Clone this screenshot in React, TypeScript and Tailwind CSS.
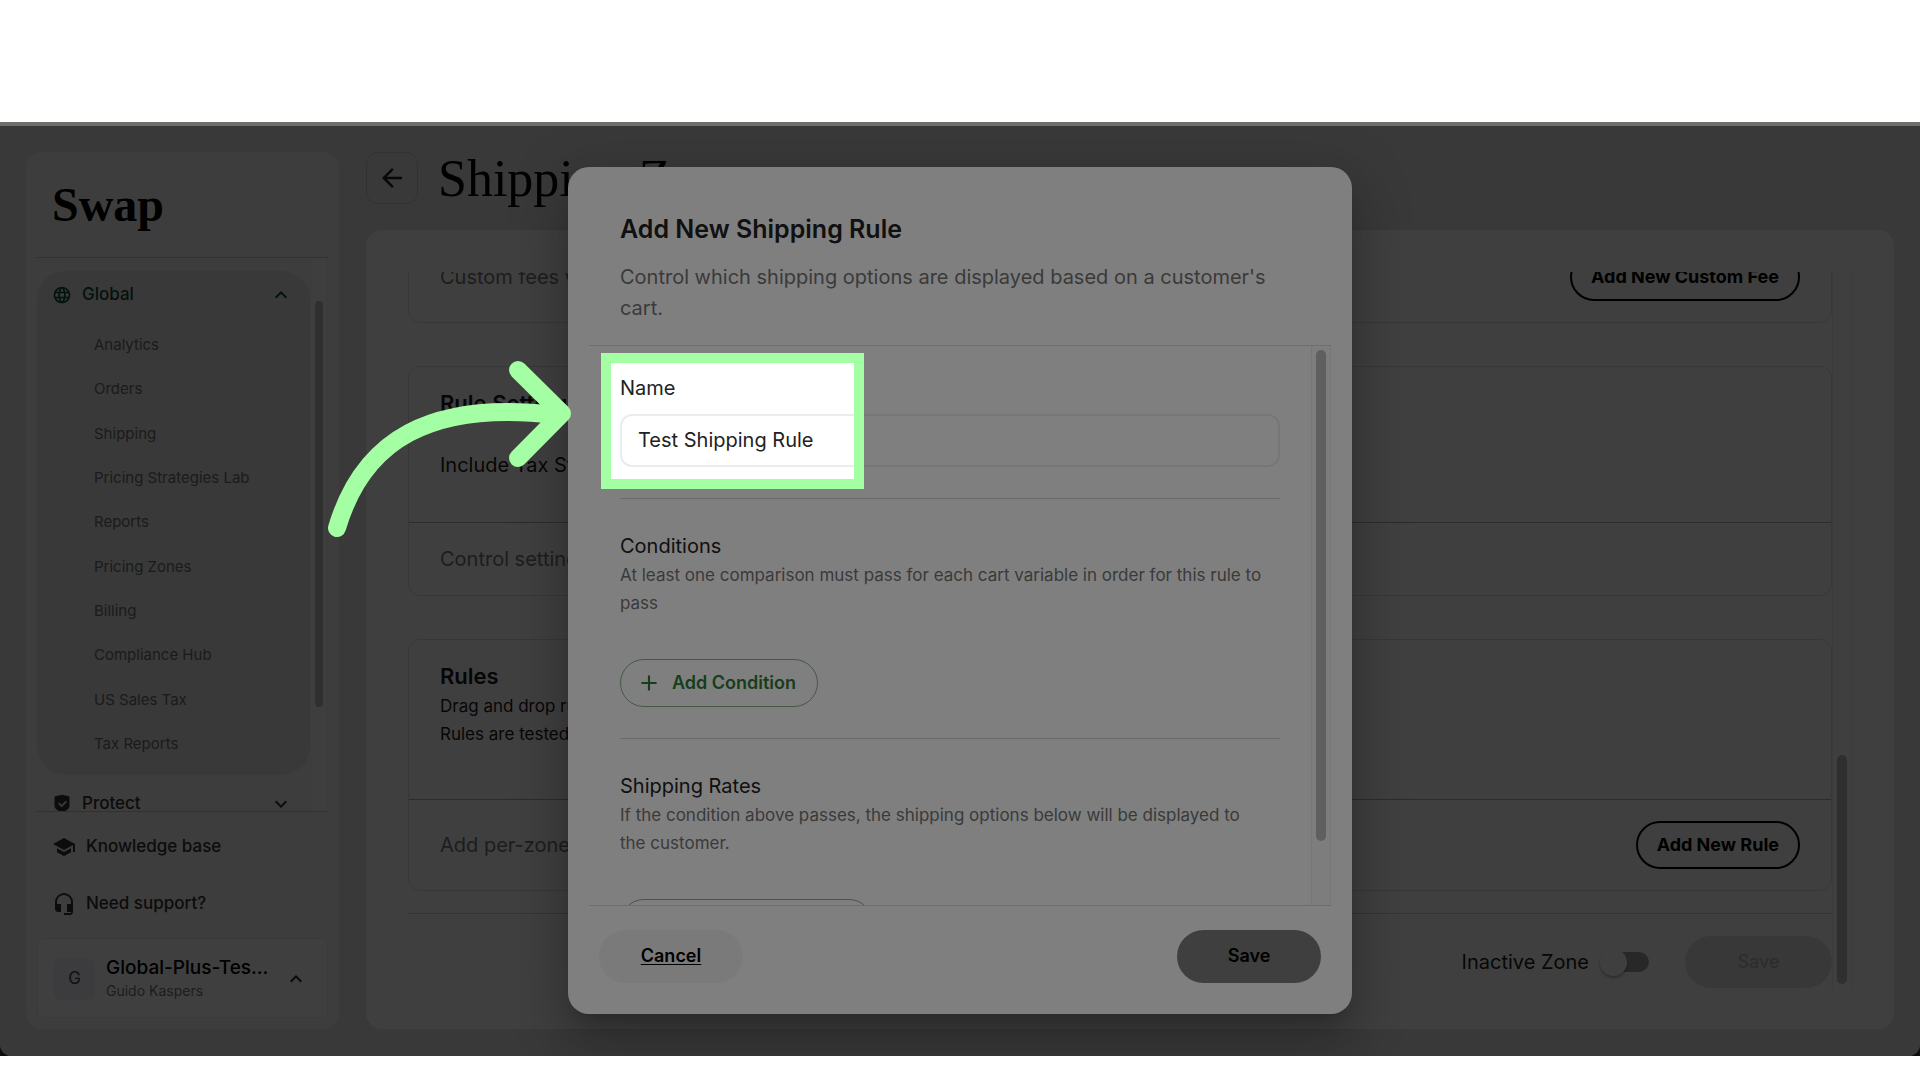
import type { ReactNode } from "react";
import {
  MdAdd,
  MdArrowBack,
  MdExpandLess,
  MdExpandMore,
  MdHeadsetMic,
  MdLanguage,
  MdSchool,
} from "react-icons/md";
import { RiShieldCheckFill } from "react-icons/ri";

const globalLinks = [
  "Analytics",
  "Orders",
  "Shipping",
  "Pricing Strategies Lab",
  "Reports",
  "Pricing Zones",
  "Billing",
  "Compliance Hub",
  "US Sales Tax",
  "Tax Reports",
];

function Sidebar() {
  return (
    <aside className="flex w-[313px] shrink-0 flex-col rounded-2xl bg-[#f5f5f5] px-[11px] pb-[11px]">
      <div className="flex h-[106px] shrink-0 items-center border-b border-[#c4c4c4] px-[15px]">
        <a
          href="#home"
          className="font-['Liberation_Serif',serif] text-5xl leading-none font-bold text-black"
        >
          Swap
        </a>
      </div>
      <div className="flex min-h-0 flex-1 border-b border-[#c4c4c4]">
        <nav className="flex-1 overflow-hidden pt-[13px]">
          <div className="rounded-[28px] bg-[#e6e6e6] pb-[9px]">
            <button className="flex h-12 w-full items-center gap-[10px] pr-[17px] pl-[15px] text-[#0d4a33]">
              <MdLanguage className="size-5" />
              <span className="flex-1 text-left text-[17px] font-medium">Global</span>
              <MdExpandLess className="size-6" />
            </button>
            <ul className="mt-1 flex h-[443px] flex-col">
              {globalLinks.map((label) => (
                <li key={label} className="flex flex-1 items-center pl-[57px]">
                  <a href="#nav" className="text-[15px] leading-5 text-[#6f6f6f]">
                    {label}
                  </a>
                </li>
              ))}
            </ul>
          </div>
          <button className="mt-px flex h-14 w-full items-center gap-[10px] pr-[17px] pl-[15px] text-[#333]">
            <RiShieldCheckFill className="size-5" />
            <span className="flex-1 text-left text-[17px] font-medium">Protect</span>
            <MdExpandMore className="size-6" />
          </button>
        </nav>
        <div className="w-[18px] border-x border-[#ececec] bg-[#fafafa] px-1 pt-[43px]">
          <div className="h-[406px] rounded-full bg-[#bcbcbc]" />
        </div>
      </div>
      <div className="py-[6px]">
        <a href="#kb" className="flex h-[57px] items-center gap-[10px] pl-[15px] text-[#333]">
          <MdSchool className="size-6" />
          <span className="text-[17px] font-medium">Knowledge base</span>
        </a>
        <a href="#support" className="flex h-[57px] items-center gap-[10px] pl-[15px] text-[#333]">
          <MdHeadsetMic className="size-6" />
          <span className="text-[17px] font-medium">Need support?</span>
        </a>
      </div>
      <button className="flex h-20 shrink-0 items-center rounded-md border border-[#ebebeb] bg-white pt-[2px] pr-[19px] pl-4 text-left">
        <span className="flex h-[42px] w-[41px] items-center justify-center rounded-lg bg-[#f0eefa] text-[17px] text-[#444]">
          G
        </span>
        <span className="ml-[11px] flex min-w-0 flex-1 flex-col">
          <span className="text-[19px] leading-6 font-medium text-black">Global-Plus-Tes...</span>
          <span className="text-sm leading-[22px] text-[#777]">Guido Kaspers</span>
        </span>
        <MdExpandLess className="size-6 shrink-0 text-[#222]" />
      </button>
    </aside>
  );
}

function Card({ children, footer }: { children: ReactNode; footer: ReactNode }) {
  return (
    <section className="shrink-0 rounded-xl border border-[#dedede]">
      <div className="border-b border-[#b0b0b0] px-[31px] pt-5">{children}</div>
      <div className="flex items-center justify-between px-[31px] py-[21px]">{footer}</div>
    </section>
  );
}

function OutlineButton({ children }: { children: ReactNode }) {
  return (
    <button className="h-12 rounded-full border-2 border-black px-[19px] text-lg font-bold text-black">
      {children}
    </button>
  );
}

function ZonePage() {
  return (
    <main className="flex min-w-0 flex-1 flex-col gap-[26px]">
      <header className="flex h-[52px] shrink-0 items-center gap-5">
        <button
          aria-label="Back"
          className="flex size-[52px] items-center justify-center rounded-xl border border-[#cacaca] text-[#222]"
        >
          <MdArrowBack className="size-[30px]" />
        </button>
        <h1 className="pt-[2px] font-['Liberation_Serif',serif] text-[52px] leading-none text-black">
          Shipping Zone
        </h1>
      </header>
      <div className="flex min-h-0 flex-1 rounded-2xl bg-white px-[42px] pt-[42px] pb-[41px]">
        <div className="flex min-w-0 flex-1 flex-col">
          <div className="flex min-h-0 flex-1 flex-col justify-end gap-[43px] overflow-hidden pb-[22px]">
            <Card
              footer={
                <>
                  <p className="text-xl text-[#777]">Custom fees will be added to the order</p>
                  <OutlineButton>Add New Custom Fee</OutlineButton>
                </>
              }
            >
              <h2 className="pb-8 text-[22px] leading-8 font-semibold">Custom Fees</h2>
            </Card>
            <Card
              footer={<p className="text-xl leading-[30px] text-[#777]">Control settings for all rules</p>}
            >
              <h2 className="text-[22px] leading-8 font-semibold">Rule Settings</h2>
              <p className="pt-[31px] pb-[42px] text-xl leading-[30px]">Include Tax Strategy</p>
            </Card>
            <Card
              footer={
                <>
                  <p className="text-xl text-[#777]">Add per-zone shipping rules</p>
                  <OutlineButton>Add New Rule</OutlineButton>
                </>
              }
            >
              <h2 className="text-[22px] leading-8 font-semibold">Rules</h2>
              <p className="text-[17px] leading-7">Drag and drop rules to reorder them.</p>
              <p className="pb-[51px] text-[17px] leading-7">Rules are tested from top to bottom.</p>
            </Card>
          </div>
          <footer className="flex shrink-0 items-end justify-end border-t border-[#cfcfcf] pt-[22px]">
            <label className="flex h-[52px] items-center gap-[11px] text-xl">
              Inactive Zone
              <input type="checkbox" className="peer sr-only" />
              <span className="relative mr-9 flex h-[27px] w-[49px] items-center justify-end">
                <span className="h-5 w-11 rounded-full bg-[#a3a3a3]" />
                <span className="absolute left-0 size-[27px] rounded-full bg-white shadow-[0_2px_3px_rgba(0,0,0,0.3)]" />
              </span>
            </label>
            <button className="h-[52px] w-[147px] rounded-full bg-[#e2e2e2] text-lg font-medium text-[#b4b4b4]">
              Save
            </button>
          </footer>
        </div>
        <div className="flex w-5 items-end border-x border-[#ececec] px-1 pb-1">
          <div className="h-[229px] w-full rounded-full bg-[#bcbcbc]" />
        </div>
      </div>
    </main>
  );
}

function AddButton({ children }: { children: ReactNode }) {
  return (
    <button className="mt-[42px] flex h-12 shrink-0 items-center gap-[10px] self-start rounded-full border border-[#86b289] pr-[21px] pl-[15px] text-lg font-semibold text-[#2f7d36]">
      <MdAdd className="size-[26px]" />
      {children}
    </button>
  );
}

function RuleDialog() {
  return (
    <div
      role="dialog"
      aria-labelledby="rule-title"
      className="flex w-[784px] flex-col rounded-[21px] bg-white text-[#222] shadow-[0_14px_20px_-9px_rgba(0,0,0,0.2),0_32px_50px_4px_rgba(0,0,0,0.14),0_12px_60px_10px_rgba(0,0,0,0.12)]"
    >
      <header className="shrink-0 px-[52px] pt-[46px] pb-[21px]">
        <h2 id="rule-title" className="text-[25px] leading-8 font-semibold">
          Add New Shipping Rule
        </h2>
        <p className="mt-[17px] text-xl leading-[31px] text-[#757575]">
          Control which shipping options are displayed based on a customer's cart.
        </p>
      </header>
      <div className="mx-[21px] flex min-h-0 flex-1 border-y border-[#dcdcdc]">
        <div className="flex min-w-0 flex-1 flex-col overflow-hidden px-[31px]">
          <label htmlFor="rule-name" className="pt-[27px] text-xl leading-[30px]">
            Name
          </label>
          <input
            id="rule-name"
            defaultValue="Test Shipping Rule"
            className="mt-[11px] h-[53px] shrink-0 rounded-xl border-2 border-[#ececf0] px-4 pb-[2px] text-xl"
          />
          <hr className="mt-[31px] border-[#d4d4d4]" />
          <h3 className="mt-8 text-xl leading-[30px]">Conditions</h3>
          <p className="pr-4 text-[17px] leading-7 text-[#757575]">
            At least one comparison must pass for each cart variable in order for this rule to pass
          </p>
          <AddButton>Add Condition</AddButton>
          <hr className="mt-[31px] border-[#d4d4d4]" />
          <h3 className="mt-8 text-xl leading-[30px]">Shipping Rates</h3>
          <p className="pr-4 text-[17px] leading-7 text-[#757575]">
            If the condition above passes, the shipping options below will be displayed to the
            customer.
          </p>
          <AddButton>Add Shipping Option</AddButton>
        </div>
        <div className="w-5 border-x border-[#ececec] bg-[#fafafa] px-1 pt-1">
          <div className="h-[491px] rounded-full bg-[#bfbfbf]" />
        </div>
      </div>
      <footer className="flex shrink-0 justify-between px-[31px] pt-6 pb-[31px]">
        <button className="h-[53px] w-36 rounded-full bg-[#f4f4f4] pb-[2px] text-lg font-semibold text-black underline underline-offset-2">
          Cancel
        </button>
        <button className="h-[53px] w-36 rounded-full bg-[#7f7f7f] pb-[2px] text-lg font-semibold text-black">
          Save
        </button>
      </footer>
    </div>
  );
}

function Annotation() {
  return (
    <>
      <div className="pointer-events-none absolute top-[231px] left-[601px] h-[136px] w-[263px] border-[10px] border-[#a4ffa4] shadow-[0_0_0_2400px_rgba(0,0,0,0.5)]" />
      <svg
        className="pointer-events-none absolute top-[231px] left-[320px] h-[190px] w-[260px]"
        viewBox="320 353 260 190"
        fill="none"
        stroke="#a4ffa4"
        strokeWidth="18"
        strokeLinecap="round"
        strokeLinejoin="round"
      >
        <path d="M337 528C363 440 430 400 556 415" />
        <path d="M518 370L562 413.500L518 458" />
      </svg>
    </>
  );
}

export default function App() {
  return (
    <div className="flex h-screen flex-col bg-white pt-[122px] pb-6 font-[Inter,sans-serif] text-[#1a1a1a]">
      <div className="relative flex min-h-0 flex-1 flex-col overflow-hidden bg-[#1c1c18]">
        <div className="h-1 shrink-0 bg-[#dcded4]" />
        <div className="relative flex min-h-0 flex-1 overflow-hidden rounded-b-xl bg-[#e4e4e4]">
          <div className="flex min-w-0 flex-1 gap-[27px] px-[26px] pt-[26px] pb-[27px]">
            <Sidebar />
            <ZonePage />
          </div>
          <div className="absolute inset-0 flex justify-center bg-black/50 pt-[41px] pb-[42px]">
            <RuleDialog />
          </div>
        </div>
        <Annotation />
      </div>
    </div>
  );
}
